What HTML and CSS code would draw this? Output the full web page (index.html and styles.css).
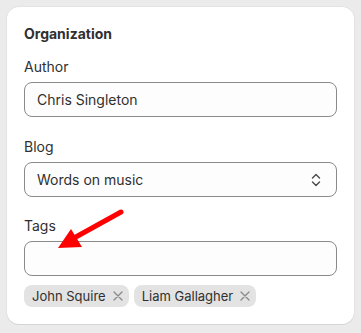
FILE: index.html
```html
<!DOCTYPE html>
<html lang="en">
<head>
    <meta charset="UTF-8">
    <title>Organization</title>
    <link rel="stylesheet" href="styles.css">
</head>
<body>
    <div class="page">
        <div class="card">
            <h2>Organization</h2>

            <div class="field">
                <label>Author</label>
                <div class="input">Chris Singleton</div>
            </div>

            <div class="field">
                <label>Blog</label>
                <div class="input select">
                    <span>Words on music</span>
                    <svg width="10" height="16" viewBox="0 0 10 16">
                        <path d="M1.5 6 L5 2.5 L8.5 6" fill="none" stroke="#4a4a4a" stroke-width="1.4" stroke-linecap="round" stroke-linejoin="round"/>
                        <path d="M1.5 10 L5 13.5 L8.5 10" fill="none" stroke="#4a4a4a" stroke-width="1.4" stroke-linecap="round" stroke-linejoin="round"/>
                    </svg>
                </div>
            </div>

            <div class="field tags">
                <label>Tags</label>
                <div class="input"></div>
                <div class="chips">
                    <span class="chip">John Squire
                        <svg width="10" height="10" viewBox="0 0 10 10"><path d="M1 1 L9 9 M9 1 L1 9" stroke="#8a8a8a" stroke-width="1.3" stroke-linecap="round"/></svg>
                    </span>
                    <span class="chip">Liam Gallagher
                        <svg width="10" height="10" viewBox="0 0 10 10"><path d="M1 1 L9 9 M9 1 L1 9" stroke="#8a8a8a" stroke-width="1.3" stroke-linecap="round"/></svg>
                    </span>
                </div>
            </div>
        </div>

        <!-- annotation arrow -->
        <svg class="arrow" width="361" height="333" viewBox="0 0 361 333">
            <line x1="121" y1="212" x2="74" y2="238" stroke="#ff0000" stroke-width="5" stroke-linecap="round"/>
            <polygon points="58,248 71,229 82,247" fill="#ff0000"/>
        </svg>
    </div>
</body>
</html>
```

FILE: styles.css
```css
*{
    margin: 0;
    padding: 0;
    box-sizing: border-box;
}

body{
    background-color: #ebebeb;
    font-family: Inter, "Noto Sans", sans-serif;
    font-size: 14px;
    line-height: 20px;
    color: #303030;
}

.page{
    position: relative;
    width: 361px;
    height: 333px;
    padding: 7px;
}

.card{
    background-color: #fff;
    border-radius: 12px;
    padding: 17px;
    box-shadow: 0 1px 0 0 rgba(26, 26, 26, 0.07), 0 0 0 1px rgba(0, 0, 0, 0.03);

    h2{
        font-size: 14px;
        font-weight: 650;
        line-height: 20px;
    }
}

.field{
    display: flex;
    flex-direction: column;
    gap: 5px;
    margin-top: 20px;

    &:first-of-type{
        margin-top: 13px;
    }

    label{
        font-size: 14px;
        line-height: 20px;
    }
}

.tags{
    margin-top: 19px;
}

.input{
    height: 35px;
    border: 1px solid #8a8a8a;
    border-radius: 8px;
    background-color: #fdfdfd;
    padding: 0 12px;
    display: flex;
    align-items: center;
    font-size: 14px;
}

.select{
    justify-content: space-between;
    padding-right: 15px;
}

.chips{
    display: flex;
    gap: 5px;
    margin-top: 4px;
}

.chip{
    display: flex;
    align-items: center;
    gap: 7px;
    height: 22px;
    padding: 0 6px 0 8px;
    border-radius: 8px;
    background-color: #e3e3e3;
    font-size: 13px;
}

.arrow{
    position: absolute;
    left: 0;
    top: 0;
    pointer-events: none;
}
```
